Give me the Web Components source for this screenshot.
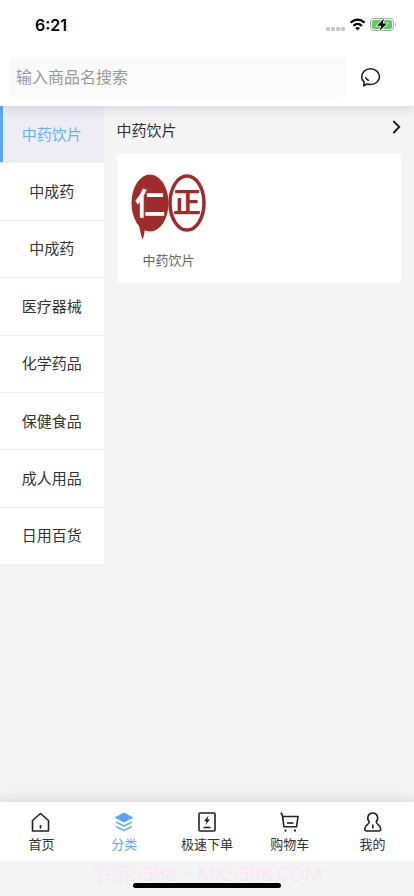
<!DOCTYPE html>
<html lang="zh-CN">
<head>
<meta charset="utf-8">
<meta name="viewport" content="width=device-width, initial-scale=1">
<title>分类</title>
<style>
  body {
    margin: 0;
    background: #f4f4f4;
    color: #333;
    font-family: "Liberation Sans", "Noto Sans CJK SC", sans-serif;
  }
</style>
</head>
<body>

<category-page>
  <status-bar slot="top" time="6:21"></status-bar>
  <search-header slot="top" placeholder="输入商品名搜索"></search-header>
  <category-menu slot="side">
    <category-item active>中药饮片</category-item>
    <category-item>中成药</category-item>
    <category-item>中成药</category-item>
    <category-item>医疗器械</category-item>
    <category-item>化学药品</category-item>
    <category-item>保健食品</category-item>
    <category-item>成人用品</category-item>
    <category-item>日用百货</category-item>
  </category-menu>
  <product-section heading="中药饮片">
    <product-tile>中药饮片</product-tile>
  </product-section>
  <tab-bar slot="bottom">
    <tab-item icon="home">首页</tab-item>
    <tab-item icon="layers" active>分类</tab-item>
    <tab-item icon="order">极速下单</tab-item>
    <tab-item icon="cart">购物车</tab-item>
    <tab-item icon="user">我的</tab-item>
  </tab-bar>
  <home-area slot="bottom">手游5588・MX5588.COM</home-area>
</category-page>

<template id="category-page-template">
  <style>
    :host {
      display: flex;
      flex-direction: column;
      height: 100vh;
      overflow: hidden;
    }
    header, footer {
      position: relative;
      background: #fff;
      box-shadow: 0 0 14px rgba(30, 30, 80, .18);
    }
    .body {
      flex: 1;
      min-height: 0;
      display: grid;
      grid-template-columns: 1fr 3fr;
      align-items: start;
    }
  </style>
  <header><slot name="top"></slot></header>
  <div class="body">
    <slot name="side"></slot>
    <main><slot></slot></main>
  </div>
  <footer><slot name="bottom"></slot></footer>
</template>

<template id="status-bar-template">
  <style>
    :host {
      display: flex;
      align-items: center;
      justify-content: space-between;
      height: 48px;
      padding: 2px 16px 0 35px;
      box-sizing: border-box;
      color: #000;
      font: 600 16px/24px Inter, sans-serif;
    }
    svg { display: block; }
  </style>
  <span id="time"></span>
  <svg width="72" height="18" viewBox="0 0 72 18" aria-hidden="true">
    <g fill="#c8c8c8">
      <rect x="0" y="11" width="4" height="4" rx="1"/>
      <rect x="5" y="11" width="4" height="4" rx="1"/>
      <rect x="10" y="11" width="4" height="4" rx="1"/>
      <rect x="15" y="11" width="4" height="4" rx="1"/>
    </g>
    <g fill="none" stroke="#000" stroke-width="2.3">
      <path d="M24.6 6.7q7-6.2 14 0"/>
      <path d="M27.4 9.8q4.2-3.8 8.4 0"/>
    </g>
    <path d="M29.2 12q2.4-1.9 4.8 0l-2.4 2.5z"/>
    <rect x="44.5" y="2.5" width="23" height="12" rx="3.5" fill="#fff" stroke="#a5a5a5"/>
    <rect x="46" y="4" width="20" height="9" rx="2" fill="#5fcb61"/>
    <path d="M69 6.500q2 2 0 4z" fill="#999"/>
    <path d="M58.200 2.500l-7.200 7.300h4.300l-1.700 5.200 7.300-7.500h-4.300z" stroke="#fff" stroke-width="1.500"/>
    <path d="M58.200 2.500l-7.200 7.300h4.300l-1.700 5.200 7.300-7.500h-4.300z"/>
  </svg>
</template>

<template id="search-header-template">
  <style>
    :host {
      display: flex;
      align-items: center;
      padding: 9px 33px 9px 10px;
      gap: 14px;
    }
    input {
      flex: 1;
      min-width: 0;
      height: 40px;
      box-sizing: border-box;
      padding: 2px 6px 0;
      border: 0;
      border-radius: 5px;
      outline: 0;
      background: #f9f9f9;
      color: #333;
      font: 16px/24px "Liberation Sans", "Noto Sans CJK SC", sans-serif;
    }
    input::placeholder { color: #999; opacity: 1; }
    button {
      padding: 0;
      border: 0;
      background: none;
      color: #222;
    }
    svg { display: block; }
  </style>
  <input id="input" type="search">
  <button type="button" aria-label="消息">
    <svg width="21" height="20" viewBox="0 0 21 20" fill="none" stroke="currentColor" stroke-width="1.600" stroke-linecap="round" stroke-linejoin="round">
      <path d="M3.700 18.800L4.200 15.200C2.500 13.700 1.700 11.700 1.700 9.700C1.700 5.300 5.600 1.700 10.500 1.700S19.500 5.300 19.500 9.700S15.500 17.500 10.500 17.500Q8.400 17.500 7 17Z"/>
      <path d="M5.700 10.500q.8 2 2.600 2.800"/>
    </svg>
  </button>
</template>

<template id="category-menu-template">
  <style>
    :host {
      display: grid;
      grid-auto-rows: 1fr;
      height: 459px;
      background: #fff;
    }
  </style>
  <slot></slot>
</template>

<template id="category-item-template">
  <style>
    :host { display: grid; }
    button {
      padding: 1px 0 0;
      border: 0;
      border-bottom: 1px solid #eee;
      background: #fff;
      color: #333;
      font: inherit;
      font-size: 15px;
      line-height: 22px;
    }
    :host([active]) button {
      box-shadow: inset 3px 0 #5aa7f8;
      background: #eeedf3;
      color: #66b1ff;
    }
  </style>
  <button type="button"><slot></slot></button>
</template>

<template id="product-section-template">
  <style>
    :host {
      display: block;
      padding: 14px 13px 0;
    }
    .head {
      display: flex;
      align-items: center;
      justify-content: space-between;
      margin-bottom: 12px;
    }
    h2 {
      margin: 0;
      font-size: 15px;
      font-weight: 400;
      line-height: 22px;
    }
    button {
      padding: 0;
      border: 0;
      background: none;
    }
    svg { display: block; }
    .grid {
      display: grid;
      grid-template-columns: repeat(3, 1fr);
      padding: 11px 0 10px;
      border-radius: 2px;
      background: #fff;
    }
  </style>
  <div class="head">
    <h2 id="heading"></h2>
    <button type="button" aria-label="更多">
      <svg width="9" height="22" viewBox="0 0 9 22" fill="none" stroke="#1a1a1a" stroke-width="1.800">
        <path d="M1.300 1l6 6-6 6"/>
      </svg>
    </button>
  </div>
  <div class="grid"><slot></slot></div>
</template>

<template id="product-tile-template">
  <style>
    :host {
      display: flex;
      flex-direction: column;
      align-items: center;
      padding: 0 0 2px 9px;
      color: #666;
      font-size: 13px;
      line-height: 20px;
    }
    svg { display: block; margin-bottom: 9px; }
    text { font-family: "Noto Sans CJK SC", sans-serif; font-weight: 700; }
  </style>
  <svg width="76" height="77" viewBox="0 0 76 77" aria-hidden="true">
    <ellipse cx="20" cy="38" rx="18.500" ry="28.500" fill="#9d2c2a"/>
    <path d="M9 60q2 11 3.500 14.500Q15 69 15 60z" fill="#9d2c2a"/>
    <ellipse cx="57" cy="38" rx="17" ry="27" fill="#fff" stroke="#9d2c2a" stroke-width="3.500"/>
    <text x="20" y="49" font-size="30" fill="#fff" text-anchor="middle">仁</text>
    <text x="57" y="48" font-size="28" fill="#9d2c2a" text-anchor="middle">正</text>
  </svg>
  <span><slot></slot></span>
</template>

<template id="tab-bar-template">
  <style>
    :host {
      display: grid;
      grid-auto-flow: column;
      grid-auto-columns: 1fr;
      padding: 8px 0 7px;
    }
  </style>
  <slot></slot>
</template>

<template id="tab-item-template">
  <style>
    :host { display: grid; }
    a {
      display: flex;
      flex-direction: column;
      align-items: center;
      gap: 2px;
      color: #333;
      font-size: 13px;
      line-height: 18px;
      text-decoration: none;
    }
    :host([active]) a { color: #5aaafa; }
    svg {
      display: block;
      fill: none;
      stroke: #222;
      stroke-width: 1.6;
    }
    g { display: none; }
    :host([icon="home"]) .home,
    :host([icon="layers"]) .layers,
    :host([icon="order"]) .order,
    :host([icon="cart"]) .cart,
    :host([icon="user"]) .user { display: inline; }
  </style>
  <a href="#">
    <svg width="24" height="24" viewBox="0 0 24 24" stroke-linejoin="round" aria-hidden="true">
      <g class="home">
        <path d="M3.500 21V10.500L11.500 3.500l8 7V21z"/>
        <path d="M11.500 15v3.500"/>
      </g>
      <g class="layers" stroke="#69b2ff">
        <path d="M12 2.500l9.500 5-9.500 5-9.500-5z" fill="#5aa5f8" stroke="none"/>
        <path d="M4 12l8 4 8-4M4 16.500l8 4 8-4"/>
      </g>
      <g class="order">
        <rect x="4" y="3" width="16" height="18" rx="1"/>
        <path d="M13.500 5.500L9 11.200h2.500L10.500 15 15 9.500h-2.500z" fill="#222" stroke="none"/>
        <path d="M8.500 17.500h7"/>
      </g>
      <g class="cart">
        <path d="M2.800 2.800l1.500 2 1.700 12h12.500L20 6.500H4.500"/>
        <path d="M9 13h6.500"/>
        <path d="M6.500 20.500h2M16 20.500h2" stroke-width="2"/>
      </g>
      <g class="user">
        <path d="M8.300 12C5.300 8.500 6.900 3 11.700 3S18.100 8.500 15.200 12C14.800 14 19.700 14.300 19.700 19Q19.700 21 17.700 21H5.800Q3.800 21 3.800 19C3.800 14.300 8.700 14 8.300 12Z"/>
        <path d="M11.800 14.500v4"/>
      </g>
    </svg>
    <span><slot></slot></span>
  </a>
</template>

<template id="home-area-template">
  <style>
    :host {
      display: block;
      position: relative;
      height: 35px;
      overflow: hidden;
      background: #f4f4f4;
      color: #f6e8f5;
      font: 20px/26px "Noto Sans", "Noto Sans CJK SC", sans-serif;
      text-align: center;
      white-space: nowrap;
    }
    .bar {
      position: absolute;
      bottom: 8px;
      left: 50%;
      width: 148px;
      height: 5px;
      margin-left: -74px;
      border-radius: 3px;
      background: #000;
    }
  </style>
  <slot></slot>
  <div class="bar"></div>
</template>

<script>
class TemplateElement extends HTMLElement {
  constructor() {
    super();
    const template = document.getElementById(`${this.constructor.is}-template`);
    this.attachShadow({mode: 'open'});
    this.shadowRoot.appendChild(template.content.cloneNode(true));
  }
  $(id) {
    return this.shadowRoot.getElementById(id);
  }
}

class StatusBar extends TemplateElement {
  static get is() {
    return 'status-bar';
  }
  connectedCallback() {
    this.$('time').textContent = this.getAttribute('time');
  }
}

class SearchHeader extends TemplateElement {
  static get is() {
    return 'search-header';
  }
  connectedCallback() {
    const placeholder = this.getAttribute('placeholder');
    this.$('input').placeholder = placeholder;
    this.$('input').setAttribute('aria-label', placeholder);
  }
}

class ProductSection extends TemplateElement {
  static get is() {
    return 'product-section';
  }
  connectedCallback() {
    this.$('heading').textContent = this.getAttribute('heading');
  }
}

class CategoryPage extends TemplateElement {
  static get is() {
    return 'category-page';
  }
}

class CategoryItem extends TemplateElement {
  static get is() {
    return 'category-item';
  }
}

// Keeps one child active at a time.
class CategoryMenu extends TemplateElement {
  static get is() {
    return 'category-menu';
  }
  connectedCallback() {
    this.addEventListener('click', (e) => {
      const item = e.target.closest('category-item, tab-item');
      if (!item) return;
      Array.from(this.children).forEach((child) => {
        child.toggleAttribute('active', child === item);
      });
    });
  }
}

class TabBar extends CategoryMenu {
  static get is() {
    return 'tab-bar';
  }
}

class TabItem extends TemplateElement {
  static get is() {
    return 'tab-item';
  }
}

class ProductTile extends TemplateElement {
  static get is() {
    return 'product-tile';
  }
}

class HomeArea extends TemplateElement {
  static get is() {
    return 'home-area';
  }
}

[
  CategoryPage, StatusBar, SearchHeader, CategoryMenu, CategoryItem,
  ProductSection, ProductTile, TabBar, TabItem, HomeArea
].forEach((element) => customElements.define(element.is, element));
</script>
</body>
</html>
